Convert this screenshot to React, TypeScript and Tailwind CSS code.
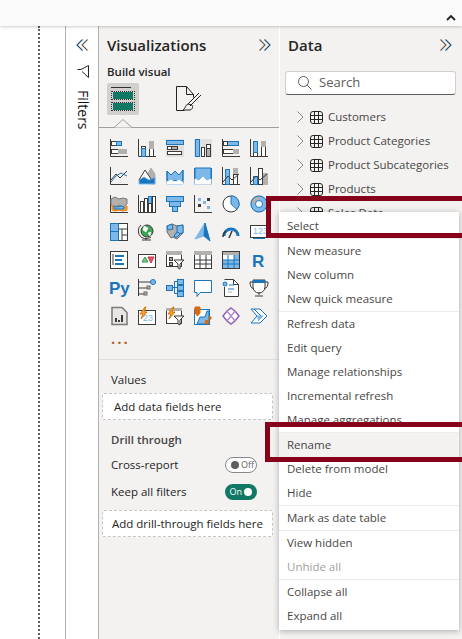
import type { ReactNode } from 'react';

const D = '#3b3a39';
const B = '#1b75bc';
const L = '#7db8e8';
const G = '#b3b0ad';
const W = '#ffffff';

function r(x: number, y: number, w: number, h: number, fill = 'none', stroke = D) {
  return <rect x={x + 0.5} y={y + 0.5} width={w} height={h} fill={fill} stroke={stroke} />;
}
function p(d: string, stroke = D, fill = 'none', sw = 1) {
  return <path d={d} stroke={stroke} fill={fill} strokeWidth={sw} />;
}

const axis = p('M.5 0V17.5H18');

const ICONS: ReactNode[] = [
  // row 1
  <>{axis}{r(1, 2, 5, 4, W)}{r(6, 2, 5, 4, L, B)}{r(1, 10, 7, 4, W)}{r(8, 10, 8, 4, G, G)}</>,
  <>{axis}{r(3, 7, 4, 10, W)}{r(3, 9, 4, 8, L, B)}{r(11, 2, 4, 15, W)}{r(11, 2, 4, 7, G, G)}</>,
  <>{r(0, 0, 17, 17, '#e1dfdd', '#e1dfdd')}{r(0, 1, 17, 4, L, B)}{r(1, 7, 10, 3, W)}{r(1, 12, 14, 3, W)}{r(5, 7, 6, 3, G)}</>,
  <>{r(0, 0, 17, 17, '#e1dfdd', '#e1dfdd')}{r(1, 0, 4, 17, L, B)}{r(7, 8, 3, 9, W)}{r(12, 5, 4, 12, W)}{r(12, 9, 4, 8, G)}</>,
  <>{axis}{r(1, 2, 15, 4, L, B)}{r(1, 2, 4, 4, W)}{r(1, 10, 10, 4, W)}{r(11, 10, 5, 4, G, G)}</>,
  <>{axis}{r(3, 2, 4, 15, W)}{r(3, 2, 4, 11, L, B)}{r(11, 2, 4, 15, W)}{r(11, 2, 4, 5, G, G)}</>,
  // row 2
  <>{axis}{p('M1 13L6 7l4 4 7-7', D)}{p('M1 15L6 9l5-3 6 3', B)}</>,
  <>{p('M10 6l3-5 4 6v10H10z', G, G)}{p('M1 13L7 3l6 9v5H1z', W, W)}{p('M1 17V13L6 10l5 3 6-3v7z', L, B)}{p('M1 13L7 3l6 9', D)}</>,
  <>{p('M1 4l4 4 4-4 4 4 4-5v10l-4 3-4-3-4 3-4-3z', B, L)}{p('M1 4v13h16V3', B)}{p('M1 15l4-2 4 3 4-3 4 3v1H1z', W, W)}</>,
  <>{p('M1 1h16v11l-4 2-4-4-4 4-4-2z', B, L)}{p('M.5 1v16h17V1', B)}{p('M1 12l4 2 4-4 4 4 4-2v5H1z', W, W)}</>,
  <>{axis}{r(3, 2, 4, 15, L, B)}{r(11, 1, 4, 6, G, G)}{r(11, 7, 4, 10, W)}{p('M1 15l5-6 4 4 7-6')}</>,
  <>{axis}{r(3, 9, 4, 8, L, B)}{r(8, 1, 4, 16, W)}{r(13, 6, 4, 11, G, G)}{p('M1 15l5-6 4 4 7-6')}</>,
  // row 3
  <>{axis}{p('M1 4l4-2 4 2 4-1 4 1v5l-4 3-4-2-4 2-4-2z', '#7a7a7a', G)}{p('M2 10l3 3 4-2 4 2 4-2v4l-4 1-4-1-4 1-3-1z', '#e8780c', '#f2a33a')}{p('M4 11l3 1 4-1 3 1v2H4z', B, L)}</>,
  <>{axis}{r(2, 6, 3, 11, W)}{r(6, 3, 3, 14, W)}{r(10, 1, 3, 7, L, B)}{r(10, 8, 3, 9, W)}{r(14, 1, 3, 16, W)}</>,
  <>{r(0, 1, 17, 5, L, B)}{r(3, 6, 11, 5, L, B)}{r(6, 11, 5, 5, L, B)}</>,
  <>{axis}<rect x="4" y="3" width="3" height="3" fill={L} /><rect x="9" y="6" width="3" height="3" fill={L} /><rect x="4" y="9" width="3" height="3" fill={D} /><rect x="13" y="3" width="3" height="3" fill={D} /><rect x="13" y="11" width="3" height="3" fill={L} /></>,
  <><circle cx="9" cy="9" r="8" fill={W} stroke={D} />{p('M9 1a8 8 0 0 1 6 13.5L9 9z', B, L)}</>,
  <><circle cx="9" cy="9" r="6" fill="none" stroke={L} strokeWidth="5" />{p('M1 7a8 8 0 0 1 8-6v4a4 4 0 0 0-4 3z', G, G)}<circle cx="9" cy="9" r="8" fill="none" stroke={B} /><circle cx="9" cy="9" r="3.5" fill={W} stroke={B} /></>,
  // row 4
  <>{r(0, 0, 17, 17, W)}{r(0, 0, 8, 8, L, B)}{r(0, 8, 8, 9, L, B)}{p('M8 6h9M12 6v11M12 12h5')}</>,
  <><circle cx="9" cy="8" r="6" fill="#3aa655" stroke={D} />{p('M6 3l4 2-2 4-3-2zM10 10l3-1-1 4z', W, W, 0.5)}{p('M3 2a8 8 0 0 0 0 12c2 2 8 2 10 0M8 15v2M4 17h9')}</>,
  <>{p('M1 3l5-2 5 2 6-1 0 8-6 6-4-2-2 1-4-6z', '#6b6a69', G)}{p('M11 3l6-1v8l-6 1z', B, L)}{p('M9 11l3-2 2 2-3 3H8z', B, L)}{p('M1 3l5-2 1 5-5 1z', B, L)}</>,
  <>{p('M11 0L1 16l9-3z', L, L)}{p('M11 0l5 18-6-5z', B, B)}</>,
  <>{p('M2 13a7 7 0 0 1 14 0', B, 'none', 3)}{p('M10 8l-3 7', D, 'none', 1.5)}{p('M1 14a8 8 0 0 1 3-6', D, 'none', 1.5)}</>,
  <>{r(0, 2, 17, 12, W)}<text x="3" y="11" fontSize="9" fill={L} fontFamily="Liberation Sans, sans-serif">123</text>{p('M3 15.5h12', B)}</>,
  // row 5
  <>{r(0, 0, 17, 17, W)}{p('M3 3v11', D)}<rect x="5" y="4" width="9" height="2" fill={B} /><rect x="5" y="8" width="7" height="2" fill={B} /><rect x="5" y="12" width="9" height="2" fill={B} /></>,
  <>{r(0, 3, 17, 13, W)}{p('M4 11l3-5 3 5z', '#2f9e44', '#7cc58a')}{p('M10 6h6l-3 6z', '#c4314b', '#e05a6d')}</>,
  <>{r(0, 0, 15, 15, W)}<rect x="0" y="0" width="16" height="4" fill={G} />{r(3, 6, 3, 3, G)}{r(3, 11, 3, 3, G)}{p('M8 9h10l-4 4v5l-2-1v-4z', D, W)}</>,
  <>{r(0, 0, 17, 17, W)}<rect x="0" y="0" width="18" height="4" fill={G} />{p('M6 4v13M12 4v13M1 9h16M1 13h16')}</>,
  <>{r(0, 0, 17, 17, W)}<rect x="0" y="0" width="18" height="4" fill={G} /><rect x="1" y="9" width="16" height="8" fill={L} /><rect x="12" y="4" width="5" height="13" fill={L} />{p('M6 4v13M12 4v13M1 9h16M1 13h16', B)}{r(0, 0, 17, 17)}</>,
  <><text x="2" y="16" fontSize="17" fontWeight="700" fill={B} fontFamily="Liberation Sans, sans-serif">R</text></>,
  // row 6
  <><text x="-1" y="15" fontSize="17" fontWeight="700" fill={B} fontFamily="Liberation Sans, sans-serif">Py</text></>,
  <>{p('M.5 0v17M.5 3H13M.5 9H9M.5 15H6', D)}<circle cx="15" cy="3" r="2.5" fill={L} stroke={B} /><rect x="9" y="7" width="3" height="3" fill={G} stroke="#6b6a69" /><rect x="6" y="13" width="3" height="3" fill={G} stroke="#6b6a69" /></>,
  <>{r(0, 6, 6, 5, L, B)}{r(11, 0, 6, 5, L, B)}{r(11, 6, 6, 5, L, B)}{r(11, 12, 6, 5, L, B)}{p('M6 8.5h5M8.5 2.5v12M8.5 2.5h3M8.5 14.5h3', B)}</>,
  <>{p('M.5 1.5h17v12H6l-3 4v-4H.5z', B, W)}</>,
  <>{p('M2.5.5h9l5 5v12h-14V8', D, W)}{p('M11.5.5v5h5')}<circle cx="3" cy="5" r="2" fill={L} stroke={B} />{p('M7 6h5M6 10h6', B)}{p('M6 13h4', G)}</>,
  <>{p('M3 1h12v7a6 6 0 0 1-12 0z', D, W)}<rect x="3" y="1" width="12" height="3" fill={B} />{p('M3 3H0c0 4 1 6 4 7M15 3h3c0 4-1 6-4 7M9 13v3M5 17h8')}</>,
  // row 7
  <>{p('M2 .5h10l5 5v12H2z', '#7a7a7a', '#e8e6e4', 1.5)}<rect x="5" y="11" width="2" height="4" fill={D} /><rect x="8" y="13" width="2" height="2" fill={D} /><rect x="11" y="8" width="2" height="7" fill={D} /></>,
  <>{r(0, 3, 17, 14, W)}<text x="5" y="14" fontSize="9" fill={L} fontFamily="Liberation Sans, sans-serif">23</text>{p('M7 0L2 7h3l-2 5 6-7H6l2-5z', '#d97706', '#f2a33a')}</>,
  <>{r(0, 1, 15, 15, W)}<rect x="0" y="1" width="16" height="3" fill={G} />{p('M8 9h10l-4 4v5l-2-1v-4z', D, W)}{p('M7 0L2 7h3l-2 5 6-7H6l2-5z', '#d97706', '#f2a33a')}</>,
  <>{r(0, 2, 15, 15, W, B)}{p('M3 17l3-7h5l2-6h2v13z', B, L)}{p('M1 0h5v6l-2.5 3L1 6z', '#d96a0c', '#d96a0c')}<circle cx="16" cy="11" r="1.7" fill="#d96a0c" /><circle cx="13" cy="15" r="2.3" fill="#d96a0c" /></>,
  <>{p('M9 1l4 3 4 5-4 5-4 3-4-3-4-5 4-5z', '#8f5fb0', '#fff', 1.5)}{p('M5 4l8 10M13 4L5 14', '#b58ccc', 'none', 1.5)}</>,
  <>{p('M1 2h9l7 7-7 7H1l6-7z', B, W)}{p('M7 9h6l-5 5', L, L)}{p('M4 2l7 7', B)}</>,
];

function Chevrons({ left, className }: { left?: boolean; className?: string }) {
  return (
    <svg width="14" height="14" viewBox="0 0 14 14" className={className} fill="none">
      <g transform={left ? 'matrix(-1 0 0 1 14 0)' : undefined}>
        <path d="M1.5 1.5L7 7l-5.5 5.5" stroke="#6b5a4a" strokeWidth="1.1" />
        <path d="M6.5 1.5L12 7l-5.5 5.5" stroke="#1f4e79" strokeWidth="1.1" />
      </g>
    </svg>
  );
}

function TableIcon() {
  return (
    <svg width="13" height="13" viewBox="0 0 13 13" fill="none" stroke="#252423" className="shrink-0">
      <rect x="0.5" y="0.5" width="12" height="12" rx="2.5" />
      <path d="M4.5 .5v12M8.5 .5v12M.5 4.5h12M.5 8.5h12" />
    </svg>
  );
}

function TableRow({ label }: { label: string }) {
  return (
    <div className="flex h-6 items-center pl-[17px] text-[11.5px] text-[#484644]">
      <svg width="7" height="12" viewBox="0 0 7 12" fill="none" stroke="#8a8886" className="shrink-0">
        <path d="M.5 .5L6 6 .5 11.5" />
      </svg>
      <span className="ml-[6px]"><TableIcon /></span>
      <span className="ml-[5px]">{label}</span>
    </div>
  );
}

function MenuItem({ label, hover, disabled }: { label: string; hover?: boolean; disabled?: boolean }) {
  return (
    <div className={`flex h-6 items-center pl-2 text-[11.5px] ${disabled ? 'text-[#a19f9d]' : 'text-[#484644]'} ${hover ? 'bg-[#f3f2f1]' : ''}`}>
      {label}
    </div>
  );
}

const Sep = () => <div className="h-px bg-[#edebe9]" />;

function DropBox({ label, indent }: { label: string; indent: string }) {
  return (
    <div className={`ml-[3px] mr-[6px] flex h-[27px] items-center rounded-[2px] border border-dashed border-[#c8c6c4] bg-white text-[11.5px] text-[#252423] ${indent}`}>
      {label}
    </div>
  );
}

export default function App() {
  return (
    <div className="relative flex h-[639px] w-[462px] flex-col overflow-hidden bg-white font-['Open_Sans','Noto_Sans',sans-serif] text-[#252423]">
      {/* top ribbon edge */}
      <div className="z-10 flex h-[26px] shrink-0 items-center justify-end bg-[#fafafa] pr-[6px] shadow-[0_1px_3px_rgba(0,0,0,0.2)]">
        <svg width="10" height="7" viewBox="0 0 10 7" fill="none" stroke="#252423" strokeWidth="1.8" className="mt-[8px]">
          <path d="M1 6l4-4 4 4" />
        </svg>
      </div>

      <div className="flex min-h-0 flex-1">
        {/* canvas */}
        <div className="w-[65px] shrink-0">
          <div className="h-full w-[40px] border-r-2 border-dotted border-[#605e5c]" />
        </div>

        {/* filters rail */}
        <div className="flex w-[34px] shrink-0 flex-col items-center border-x border-[#b3b0ad] bg-white pt-[12px]">
          <Chevrons left />
          <svg width="13" height="14" viewBox="0 0 13 14" fill="none" stroke="#252423" className="mt-[13px] ml-[3px]">
            <path d="M.5 4.5h3.5L11.5.5v12L5 6.5" />
          </svg>
          <span className="mt-[11px] ml-[1px] text-[14px] font-medium leading-[16px] text-[#111111] [writing-mode:vertical-rl]">Filters</span>
        </div>

        {/* visualizations */}
        <div className="flex w-[180px] shrink-0 flex-col bg-[#f3f2f1]">
          <div className="flex h-[31px] shrink-0 items-end justify-between pb-[1px] pl-2 pr-[7px]">
            <span className="text-[15px] font-semibold leading-[22px]">Visualizations</span>
            <Chevrons className="mb-[4px]" />
          </div>
          <div className="pl-2 pt-[7px] text-[11.5px] font-semibold leading-4">Build visual</div>
          <div className="mt-[3px] flex items-center pl-2">
            <div className="flex h-8 w-8 flex-col gap-[1px] rounded-[2px] bg-[#d2d0ce] px-[4px] pt-[4px]">
              <div className="h-px w-5 bg-[#323130]" />
              <div className="mt-[2px] flex h-[9px] items-center border border-dotted border-[#323130] px-px"><div className="h-full w-full bg-[#117865]" /></div>
              <div className="mt-[1px] flex h-[9px] items-center border border-dotted border-[#323130] px-px"><div className="h-full w-full bg-[#117865]" /></div>
            </div>
            <svg width="26" height="26" viewBox="0 0 26 26" fill="none" stroke="#252423" className="ml-[37px]">
              <path d="M.5 24.5V.5h10l7 8v3M.5 24.5h8M10.5.5v8h7" />
              <path d="M25 9L14 20M23 7L12 18M12 18c-3 1-2 4-5 6h7c3-1 3-3 2-5z" fill="#f3f2f1" />
            </svg>
          </div>
          <div className="relative mt-3 h-px shrink-0 bg-[#a19f9d]">
            <svg width="18" height="9" viewBox="0 0 18 9" className="absolute left-[15px] top-[-8px]">
              <path d="M0 8.5L9 .5l9 8" fill="#f3f2f1" stroke="#a19f9d" />
            </svg>
          </div>
          <div className="mt-[11px] grid grid-cols-[repeat(6,28px)] grid-rows-[repeat(7,28px)] pl-[11px]">
            {ICONS.map((icon, i) => (
              <svg key={i} width="18" height="18" viewBox="0 0 18 18" className="overflow-visible">{icon}</svg>
            ))}
          </div>
          <div className="mt-[-2px] pl-[12px] text-[15px] font-bold leading-[10px] tracking-[2px] text-[#b4622a]">...</div>
          <div className="mt-[16px] h-px shrink-0 bg-[#e1dfdd]" />
          <div className="pl-3 pt-[12px] text-[11.5px] leading-4">Values</div>
          <div className="mt-[5px]"><DropBox label="Add data fields here" indent="pl-[11px]" /></div>
          <div className="pl-3 pt-[12px] text-[11.5px] font-semibold leading-4 text-[#484644]">Drill through</div>
          <div className="mt-[9px] flex h-4 items-center justify-between pl-3 pr-[22px] text-[11.5px]">
            <span>Cross-report</span>
            <div className="flex h-4 w-8 items-center rounded-full border border-[#8a8886] bg-white pl-[5px] text-[9px] text-[#605e5c]">
              <span className="mr-[2px] h-2 w-2 rounded-full bg-[#605e5c]" />Off
            </div>
          </div>
          <div className="mt-[11px] flex h-4 items-center justify-between pl-3 pr-[22px] text-[11.5px]">
            <span>Keep all filters</span>
            <div className="flex h-4 w-8 items-center justify-end rounded-full bg-[#117865] pr-[5px] text-[9px] text-white">
              On<span className="ml-[2px] h-2 w-2 rounded-full bg-white" />
            </div>
          </div>
          <div className="mt-[10px]"><DropBox label="Add drill-through fields here" indent="pl-[9px]" /></div>
        </div>

        {/* data */}
        <div className="flex min-w-0 flex-1 flex-col border-l border-white bg-[#f3f2f1]">
          <div className="flex h-[31px] shrink-0 items-end justify-between pb-[1px] pl-2 pr-[9px]">
            <span className="text-[15px] font-semibold leading-[22px]">Data</span>
            <Chevrons className="mb-[4px]" />
          </div>
          <div className="ml-[5px] mr-[6px] mt-[14px] flex h-[24px] items-center rounded-[3px] border border-[#d2d0ce] border-b-[#605e5c] bg-white pl-[12px] text-[13px] text-[#605e5c]">
            <svg width="14" height="14" viewBox="0 0 14 14" fill="none" stroke="#605e5c">
              <circle cx="5.5" cy="5.5" r="5" />
              <path d="M9 9l4.5 4.5" />
            </svg>
            <span className="ml-[7px]">Search</span>
          </div>
          <div className="mt-[10px]">
            <TableRow label="Customers" />
            <TableRow label="Product Categories" />
            <TableRow label="Product Subcategories" />
            <TableRow label="Products" />
            <TableRow label="Sales Data" />
          </div>
        </div>
      </div>

      {/* context menu */}
      <div className="absolute left-[279px] top-[212px] w-[180px] bg-white py-[2px] shadow-[0_1px_6px_rgba(0,0,0,0.3)]">
        <MenuItem label="Select" />
        <Sep />
        <MenuItem label="New measure" />
        <MenuItem label="New column" />
        <MenuItem label="New quick measure" />
        <Sep />
        <MenuItem label="Refresh data" />
        <MenuItem label="Edit query" />
        <MenuItem label="Manage relationships" />
        <MenuItem label="Incremental refresh" />
        <MenuItem label="Manage aggregations" />
        <Sep />
        <MenuItem label="Rename" hover />
        <MenuItem label="Delete from model" />
        <MenuItem label="Hide" />
        <Sep />
        <MenuItem label="Mark as date table" />
        <Sep />
        <MenuItem label="View hidden" />
        <MenuItem label="Unhide all" disabled />
        <Sep />
        <MenuItem label="Collapse all" />
        <MenuItem label="Expand all" />
      </div>

      {/* red callouts */}
      <div className="absolute left-[266px] top-[196px] h-[42px] w-[210px] border-[5px] border-[#86001b]" />
      <div className="absolute left-[265px] top-[422px] h-[40px] w-[210px] border-[5px] border-[#86001b]" />
    </div>
  );
}
